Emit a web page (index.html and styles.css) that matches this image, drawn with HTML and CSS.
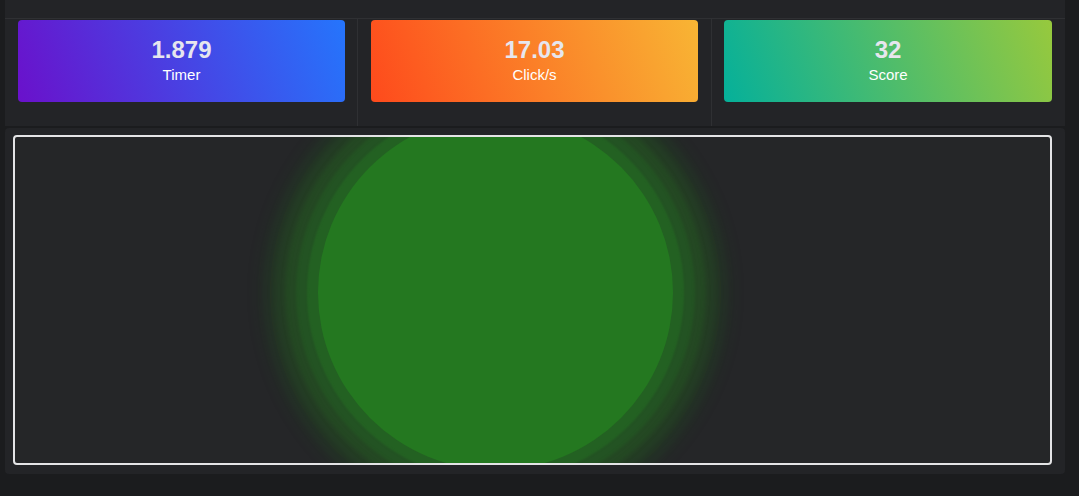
FILE: index.html
```html
<!DOCTYPE html>
<html lang="en">
<head>
<meta charset="utf-8">
<title>Click Speed</title>
<link rel="stylesheet" href="styles.css">
</head>
<body>
<div class="page">
  <section class="stats-panel">
    <div class="stats-head"></div>
    <div class="stats-row">
      <div class="stat-col">
        <div class="stat-card card-timer">
          <div class="stat-value">1.879</div>
          <div class="stat-label">Timer</div>
        </div>
      </div>
      <div class="stat-col">
        <div class="stat-card card-cps">
          <div class="stat-value">17.03</div>
          <div class="stat-label">Click/s</div>
        </div>
      </div>
      <div class="stat-col">
        <div class="stat-card card-score">
          <div class="stat-value">32</div>
          <div class="stat-label">Score</div>
        </div>
      </div>
    </div>
  </section>
  <section class="play-panel">
    <div class="play-area">
      <div class="target"></div>
    </div>
  </section>
</div>
</body>
</html>
```

FILE: styles.css
```css
html, body {
  margin: 0;
  padding: 0;
  background: #1b1c1e;
  font-family: "Liberation Sans", Arial, sans-serif;
}

.page {
  width: 1060px;
  margin-left: 5px;
  display: flex;
  flex-direction: column;
  gap: 2px;
}

.stats-panel {
  background: #232427;
  height: 126px;
  display: flex;
  flex-direction: column;
}

.stats-head {
  height: 18px;
  border-bottom: 1px solid #2f3033;
}

.stats-row {
  flex: 1;
  display: grid;
  grid-template-columns: 352px 354px 354px;
}

.stat-col {
  padding: 1px 12px 0 13px;
}

.stat-col + .stat-col {
  border-left: 1px solid #2f3033;
}

.stat-col:nth-child(2) {
  padding-right: 13px;
}

.stat-col:nth-child(3) {
  padding-left: 12px;
  padding-right: 13px;
}

.stat-card {
  height: 82px;
  border-radius: 4px;
  display: flex;
  flex-direction: column;
  align-items: center;
  padding-top: 17px;
  box-sizing: border-box;
}

.card-timer { background: linear-gradient(70deg, #6a11cb, #2575fc); }
.card-cps { background: linear-gradient(70deg, #fe4a1c, #f8b534); }
.card-score { background: linear-gradient(70deg, #05b09a, #97c93d); }

.stat-value {
  font-size: 24px;
  font-weight: bold;
  color: #e6e6ee;
  line-height: 26px;
}

.stat-label {
  font-size: 15px;
  color: #ffffff;
  line-height: 20px;
  margin-top: 2px;
}

.play-panel {
  background: #232427;
  border-radius: 4px;
  padding: 7px 13px 9px 8px;
}

.play-area {
  position: relative;
  height: 326px;
  border: 2px solid #e4e4e6;
  border-radius: 4px;
  background: #252628;
  overflow: hidden;
}

.target {
  position: absolute;
  left: 303px;
  top: -22px;
  width: 355px;
  height: 355px;
  border-radius: 50%;
  background: #247820;
  box-shadow:
    0 0 2px 11px rgba(36, 110, 34, 0.55),
    0 0 3px 22px rgba(36, 100, 34, 0.4),
    0 0 4px 33px rgba(36, 100, 34, 0.3),
    0 0 6px 44px rgba(36, 100, 34, 0.22),
    0 0 8px 54px rgba(36, 100, 34, 0.14),
    0 0 12px 62px rgba(36, 100, 34, 0.08);
}
```
